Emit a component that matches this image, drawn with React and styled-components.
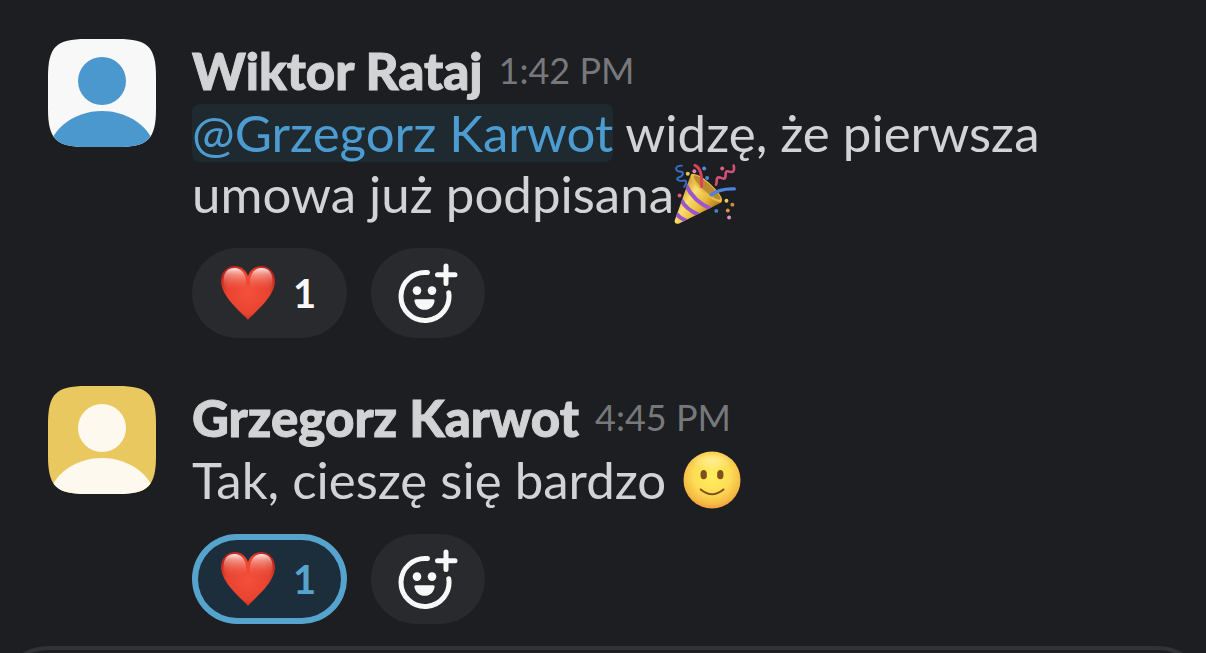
import React from "react";
import styled, { createGlobalStyle } from "styled-components";

function Person({ back, front, id }) {
  const shape =
    "M0 38 C0 8 8 0 38 0 H70 C100 0 108 8 108 38 V70 C108 100 100 108 70 108 H38 C8 108 0 100 0 70Z";
  return (
    <Avatar viewBox="0 0 108 108" aria-hidden="true">
      <clipPath id={`avatar-${id}`}>
        <path d={shape} />
      </clipPath>
      <g clipPath={`url(#avatar-${id})`}>
        <rect width="108" height="108" fill={back} />
        <circle cx="54" cy="42" r="24" fill={front} />
        <ellipse cx="54" cy="117" rx="54" ry="45" fill={front} />
      </g>
    </Avatar>
  );
}

function PartyPopper() {
  return (
    <Emoji viewBox="44 22 186 186" aria-hidden="true">
      <defs>
        <linearGradient id="cone" x1="60" y1="100" x2="160" y2="170" gradientUnits="userSpaceOnUse">
          <stop offset="0" stopColor="#c9922a" />
          <stop offset="0.35" stopColor="#fbdf6c" />
          <stop offset="0.7" stopColor="#e9b93b" />
          <stop offset="1" stopColor="#b97f20" />
        </linearGradient>
        <clipPath id="cone-clip">
          <path d="M96 56 L46 198 Q45 209 58 207 L190 142 Q150 60 96 56Z" />
        </clipPath>
      </defs>
      <path d="M96 56 L46 198 Q45 209 58 207 L190 142 Q150 60 96 56Z" fill="url(#cone)" />
      <g clipPath="url(#cone-clip)" fill="none" stroke="#9a55cf" strokeWidth="12">
        <path d="M80 88 Q103 139 158 163" />
        <path d="M64 130 Q78 163 122 181" />
        <path d="M47 170 Q58 190 84 199" />
      </g>
      <ellipse cx="143" cy="98" rx="62" ry="17" transform="rotate(42 143 98)" fill="#e8bb4b" />
      <ellipse cx="145" cy="97" rx="54" ry="12" transform="rotate(42 145 97)" fill="#b98a2f" />
      <g fill="none" strokeLinecap="round">
        <path d="M128 94 C130 64 126 37 108 29" stroke="#d9415e" strokeWidth="9" />
        <path d="M157 119 Q185 99 228 101" stroke="#4b83df" strokeWidth="10" />
        <path
          d="M68 30 C44 30 48 48 61 48 C78 48 72 62 58 66 C47 72 59 78 70 76 C84 73 84 84 75 95"
          stroke="#356fc7"
          strokeWidth="6"
        />
        <path
          d="M226 30 C230 50 222 51 211 48 C196 43 205 61 199 69 C191 73 182 60 176 68 C172 74 176 82 172 88"
          stroke="#d64f78"
          strokeWidth="8"
        />
      </g>
      <circle cx="86" cy="55" r="6" fill="#efc63f" />
      <circle cx="106" cy="47" r="6" fill="#d989bb" />
      <circle cx="136" cy="39" r="6" fill="#4f8de0" />
      <circle cx="145" cy="68" r="6" fill="#478bd8" />
      <circle cx="191" cy="39" r="6" fill="#e0627d" />
      <circle cx="61" cy="121" r="6" fill="#db5879" />
      <circle cx="204" cy="137" r="6" fill="#f1cb4c" />
      <circle cx="222" cy="149" r="6" fill="#d58b3c" />
      <circle cx="173" cy="168" r="6" fill="#4281cd" />
      <circle cx="208" cy="167" r="6" fill="#dd9442" />
      <circle cx="212" cy="188" r="6" fill="#df8dc4" />
    </Emoji>
  );
}

function SmileFace() {
  return (
    <Emoji viewBox="0 0 61 61" aria-hidden="true">
      <defs>
        <radialGradient id="face" cx="0.5" cy="0.42" r="0.6">
          <stop offset="0" stopColor="#ffef60" />
          <stop offset="0.55" stopColor="#fddc55" />
          <stop offset="0.85" stopColor="#f6b944" />
          <stop offset="1" stopColor="#e9963a" />
        </radialGradient>
        <radialGradient id="face-shine">
          <stop offset="0" stopColor="#fff3b0" stopOpacity="0.7" />
          <stop offset="1" stopColor="#fff3b0" stopOpacity="0" />
        </radialGradient>
      </defs>
      <circle cx="33" cy="31" r="28.5" fill="url(#face)" />
      <ellipse cx="33" cy="12" rx="20" ry="9" fill="url(#face-shine)" />
      <ellipse cx="24.7" cy="25.7" rx="3.2" ry="4.6" fill="#80501b" />
      <ellipse cx="41.3" cy="25.7" rx="3.2" ry="4.6" fill="#80501b" />
      <path d="M21.7 40.5 Q33 50 44.5 40.5" fill="none" stroke="#80501b" strokeWidth="2" strokeLinecap="round" />
    </Emoji>
  );
}

function Heart({ id }) {
  const outline =
    "M27 54 C24 49 0 32 0 15 C0 6 6 0 14 0 C20 0 25 4 27 10 C29 4 34 0 40 0 C48 0 54 6 54 15 C54 32 30 49 27 54Z";
  return (
    <HeartIcon viewBox="0 0 54 54" aria-hidden="true">
      <defs>
        <radialGradient id={`heart-${id}`} cx="0.5" cy="0.5" r="0.6">
          <stop offset="0" stopColor="#f4503c" />
          <stop offset="0.65" stopColor="#e8432f" />
          <stop offset="1" stopColor="#b52018" />
        </radialGradient>
        <linearGradient id={`shine-${id}`} x1="0" y1="0" x2="0" y2="1">
          <stop offset="0" stopColor="#fff" stopOpacity="0.9" />
          <stop offset="0.3" stopColor="#ffc2b8" stopOpacity="0.6" />
          <stop offset="1" stopColor="#f4604c" stopOpacity="0" />
        </linearGradient>
      </defs>
      <path d={outline} fill={`url(#heart-${id})`} />
      <path
        d="M2.5 15 C2.5 6 7 2 13.5 2 C20 2 24 7 25 14 V24 H5 C3 21 2.5 18 2.5 15Z"
        fill={`url(#shine-${id})`}
      />
      <path
        d="M51.5 15 C51.5 6 47 2 40.5 2 C34 2 30 7 29 14 V24 H49 C51 21 51.5 18 51.5 15Z"
        fill={`url(#shine-${id})`}
      />
    </HeartIcon>
  );
}

function AddReactionIcon() {
  return (
    <AddIcon viewBox="0 0 60 60" aria-hidden="true">
      <g fill="none" stroke="#f8f8f8" strokeWidth="5" strokeLinecap="round">
        <path d="M29.5 9.6 A24 24 0 1 0 50.7 29.7" />
        <path d="M39.5 11.7 H57 M48 3 V20.4" />
      </g>
      <circle cx="19" cy="27.6" r="4.3" fill="#f8f8f8" />
      <circle cx="34" cy="27.6" r="4.3" fill="#f8f8f8" />
      <path d="M18 36.2 H35 Q37 36.2 36.6 38 C35.5 43.5 32 46.8 26.7 46.8 C21.3 46.8 17.7 43.5 16.4 38 Q16 36.2 18 36.2Z" fill="#f8f8f8" />
    </AddIcon>
  );
}

function Message({ id, author, time, avatar, active, children }) {
  return (
    <MessageRow>
      <Person id={id} {...avatar} />
      <Content>
        <Header>
          <Author>{author}</Author>
          <Time>{time}</Time>
        </Header>
        <Body>{children}</Body>
        <Reactions>
          <Reaction type="button" $active={active}>
            <Heart id={id} />
            <span>1</span>
          </Reaction>
          <AddReaction type="button">
            <AddReactionIcon />
          </AddReaction>
        </Reactions>
      </Content>
    </MessageRow>
  );
}

function App() {
  return (
    <Page>
      <GlobalStyle />
      <Messages>
        <Message
          id="wiktor"
          author="Wiktor Rataj"
          time="1:42 PM"
          avatar={{ back: "#f8f8f8", front: "#4a98cd" }}
        >
          <Mention href="#grzegorz">@Grzegorz Karwot</Mention> widzę, że
          pierwsza umowa już podpisana
          <PartyPopper />
        </Message>
        <Message
          id="grzegorz"
          author="Grzegorz Karwot"
          time="4:45 PM"
          avatar={{ back: "#eac860", front: "#fef9ee" }}
          active
        >
          Tak, cieszę się bardzo <SmileFace />
        </Message>
      </Messages>
      <Composer />
    </Page>
  );
}

export default App;

const GlobalStyle = createGlobalStyle`
  * {
    box-sizing: border-box;
  }

  body {
    margin: 0;
    background: #1d1e21;
    color: #d2d3d5;
    font-family: Lato, "Liberation Sans", sans-serif;
  }
`;

const Page = styled.main`
  display: flex;
  flex-direction: column;
  gap: 22px;
  height: 100vh;
  padding-top: 39px;
  overflow: hidden;
`;

// Message list

const Messages = styled.div`
  display: flex;
  flex-direction: column;
  gap: 48px;
  padding: 0 48px;
`;

const MessageRow = styled.article`
  display: flex;
  gap: 36px;
`;

const Avatar = styled.svg`
  flex: none;
  width: 108px;
  height: 108px;
`;

const Content = styled.div`
  flex: 1;
  min-width: 0;
`;

const Header = styled.div`
  display: flex;
  align-items: center;
  gap: 16px;
  line-height: 63px;
`;

const Author = styled.strong`
  font-size: 51px;
  font-weight: 900;
  -webkit-text-stroke: 1px currentColor;
`;

const Time = styled.time`
  color: #77787b;
  font-size: 36px;
`;

const Body = styled.p`
  margin: 0;
  font-size: 51px;
  line-height: 61px;
`;

const Mention = styled.a`
  display: inline-block;
  border-radius: 8px;
  background: #1e2a30;
  color: #4c9bd1;
  line-height: 58px;
  text-decoration: none;
`;

const Emoji = styled.svg`
  width: 61px;
  height: 61px;
  vertical-align: top;
  overflow: visible;
`;

// Reactions

const Reactions = styled.div`
  display: flex;
  gap: 24px;
  margin-top: 24px;
`;

const Pill = styled.button`
  display: flex;
  align-items: center;
  height: 90px;
  border: 0;
  border-radius: 45px;
  background: #292a2d;
  color: #f8f8f8;
  font: bold 40px Lato, "Liberation Sans", sans-serif;
  cursor: pointer;
`;

const Reaction = styled(Pill)`
  gap: 18px;
  padding: 0 31px 0 29px;
  ${(props) =>
    props.$active &&
    `
    background: #1c2e3b;
    box-shadow: inset 0 0 0 6px #56a3cd;
    color: #56a3cd;
  `}
`;

const AddReaction = styled(Pill)`
  padding: 0 27px;
`;

const HeartIcon = styled.svg`
  width: 54px;
  height: 54px;
`;

const AddIcon = styled.svg`
  width: 60px;
  height: 60px;
`;

// Top edge of the message box

const Composer = styled.div`
  flex: none;
  height: 120px;
  border: 4px solid #313236;
  border-radius: 48px 48px 0 0;
`;
